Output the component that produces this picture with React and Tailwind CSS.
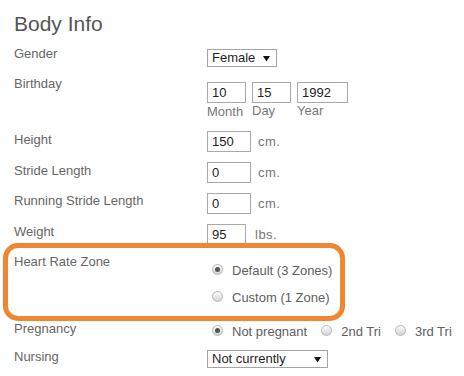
import React from 'react';

const Arrow = () => (
  <svg width="7" height="7" viewBox="0 0 7 7" className="shrink-0">
    <path d="M0 1 L7 1 L3.5 6.5 Z" fill="#111" />
  </svg>
);

const Select = ({ value, width }) => (
  <div className={`flex items-center justify-between h-[18px] border border-[#a5a5a5] bg-white pl-[4px] pr-[6px] text-[#1e1e1e] leading-[16px] ${width}`}>
    <span>{value}</span>
    <Arrow />
  </div>
);

const Field = ({ value, width }) => (
  <div className={`h-[21px] border border-[#a9a9a9] bg-white pl-[4px] text-[#222] leading-[19px] ${width}`}>{value}</div>
);

const Radio = ({ checked, label }) => (
  <div className="flex items-center gap-[9px] h-[15px] shrink-0 whitespace-nowrap">
    <span className="flex items-center justify-center w-[11px] h-[11px] rounded-full border border-[#b8b8b8] bg-linear-to-b from-[#fbfbfb] to-[#d4d4d4]">
      {checked && <span className="w-[5px] h-[5px] rounded-full bg-[#555]" />}
    </span>
    <span className="text-[#606060] pt-[2px]">{label}</span>
  </div>
);

const Row = ({ label, height, children }) => (
  <div className={`flex items-start ${height}`}>
    <div className="w-[193px] shrink-0 text-[#666] leading-[15px]">{label}</div>
    {children}
  </div>
);

export default function App() {
  return (
    <div className="min-h-screen bg-white pl-[14px] pt-[12px] text-[13px] font-['Liberation_Sans',Arial,sans-serif] overflow-hidden">
      <h1 className="text-[21px] leading-[24px] text-[#555]">Body Info</h1>

      <div className="mt-[10px]">
        <Row label="Gender" height="h-[30px]">
          <div className="mt-[3px]">
            <Select value="Female" width="w-[70px]" />
          </div>
        </Row>

        <Row label="Birthday" height="h-[56px]">
          <div className="mt-[6px] flex gap-[6px]">
            <div className="flex flex-col w-[39px]">
              <Field value="10" width="w-[39px] h-[20px]" />
              <span className="text-[#777] leading-[15px] mt-px">Month</span>
            </div>
            <div className="flex flex-col w-[39px]">
              <Field value="15" width="w-[39px]" />
              <span className="text-[#777] leading-[15px]">Day</span>
            </div>
            <div className="flex flex-col w-[51px]">
              <Field value="1992" width="w-[51px]" />
              <span className="text-[#777] leading-[15px]">Year</span>
            </div>
          </div>
        </Row>

        <Row label="Height" height="h-[31px]">
          <div className="-mt-px flex items-center gap-[7px]">
            <Field value="150" width="w-[44px]" />
            <span className="text-[#777] tracking-[0.5px]">cm.</span>
          </div>
        </Row>

        <Row label="Stride Length" height="h-[30px]">
          <div className="-mt-px flex items-center gap-[7px]">
            <Field value="0" width="w-[44px]" />
            <span className="text-[#777] tracking-[0.5px]">cm.</span>
          </div>
        </Row>

        <Row label="Running Stride Length" height="h-[31px]">
          <div className="flex items-center gap-[7px]">
            <Field value="0" width="w-[44px]" />
            <span className="text-[#777] tracking-[0.5px]">cm.</span>
          </div>
        </Row>

        <Row label="Weight" height="h-[30px]">
          <div className="flex items-center gap-[9px]">
            <Field value="95" width="w-[39px]" />
            <span className="text-[#777] tracking-[0.5px]">lbs.</span>
          </div>
        </Row>

        <div className="relative">
          <Row label="Heart Rate Zone" height="h-[67px]">
            <div className="mt-[8px] pl-[5px] flex flex-col gap-[12px]">
              <Radio checked label="Default (3 Zones)" />
              <Radio label="Custom (1 Zone)" />
            </div>
          </Row>
          {/* annotation box */}
          <div className="absolute left-[-11px] top-[-11px] w-[342px] h-[78px] border-[5px] border-[#ef8632] rounded-[15px] pointer-events-none" />
        </div>

        <Row label="Pregnancy" height="h-[28px]">
          <div className="mt-[2px] pl-[5px] flex gap-[14px] shrink-0">
            <Radio checked label="Not pregnant" />
            <Radio label="2nd Tri" />
            <Radio label="3rd Tri" />
          </div>
        </Row>

        <Row label="Nursing" height="h-[24px]">
          <div className="mt-px">
            <Select value="Not currently" width="w-[121px]" />
          </div>
        </Row>
      </div>
    </div>
  );
}
